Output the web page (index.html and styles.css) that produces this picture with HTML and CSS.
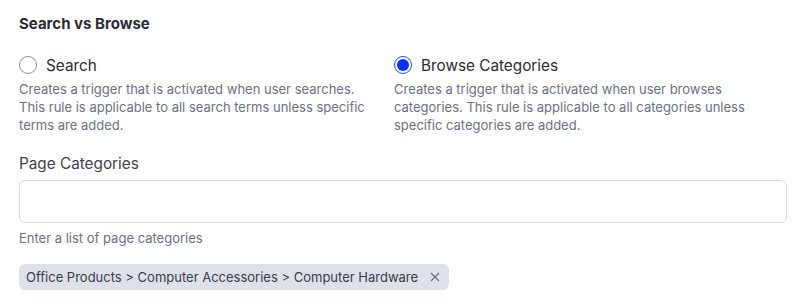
FILE: index.html
```html
<!DOCTYPE html>
<html>
<head>
<meta charset="utf-8">
<link rel="stylesheet" href="styles.css">
</head>
<body>
<div class="panel">
  <h2 class="title">Search vs Browse</h2>
  <div class="options">
    <div class="option">
      <label class="radio-row"><span class="radio"></span><span class="radio-label">Search</span></label>
      <p class="desc">Creates a trigger that is activated when user searches. This rule is applicable to all search terms unless specific terms are added.</p>
    </div>
    <div class="option">
      <label class="radio-row"><span class="radio checked"></span><span class="radio-label">Browse Categories</span></label>
      <p class="desc">Creates a trigger that is activated when user browses categories. This rule is applicable to all categories unless specific categories are added.</p>
    </div>
  </div>
  <div class="field">
    <div class="field-label">Page Categories</div>
    <div class="input"></div>
    <div class="help">Enter a list of page categories</div>
  </div>
  <div class="chips">
    <span class="chip">Office Products &gt; Computer Accessories &gt; Computer Hardware<svg class="chip-x" width="10" height="10" viewBox="0 0 10 10"><path d="M1 1L9 9M9 1L1 9" stroke="#6b6e80" stroke-width="1.2" fill="none"/></svg></span>
  </div>
</div>
</body>
</html>
```
FILE: styles.css
```css
html, body {
  margin: 0;
  padding: 0;
  background: #ffffff;
}
body {
  font-family: Inter, "Noto Sans", sans-serif;
  color: #2b2d3a;
}
.panel {
  padding: 14px 13px 0 19px;
}
.title {
  margin: 0;
  font-size: 15px;
  font-weight: 700;
  line-height: 20px;
  color: #2a2c36;
}
.options {
  display: grid;
  grid-template-columns: 355px 1fr;
  column-gap: 20px;
  margin-top: 20px;
}
.radio-row {
  display: flex;
  align-items: center;
  gap: 9px;
  height: 22px;
}
.radio {
  width: 16px;
  height: 16px;
  border: 1px solid #8d8f9c;
  border-radius: 50%;
  box-sizing: content-box;
  position: relative;
  flex: none;
}
.radio.checked {
  border-color: #1e4fd6;
  background: #ffffff;
}
.radio.checked::after {
  content: "";
  position: absolute;
  left: 2px;
  top: 2px;
  width: 12px;
  height: 12px;
  border-radius: 50%;
  background: #0a2ef5;
}
.radio-label {
  font-size: 15.3px;
  color: #2a2c36;
}
.desc {
  margin: 4px 0 0 0;
  font-size: 13px;
  line-height: 18px;
  color: #6c6f86;
}
.field {
  margin-top: 20px;
}
.field-label {
  font-size: 15.3px;
  line-height: 20px;
  color: #3f4150;
}
.input {
  margin-top: 6px;
  height: 43px;
  box-sizing: border-box;
  border: 1px solid #d8d9de;
  border-radius: 6px;
  background: #fff;
}
.help {
  margin-top: 7px;
  font-size: 13px;
  line-height: 16px;
  color: #6c6f86;
}
.chips {
  margin-top: 18px;
  display: flex;
}
.chip {
  display: inline-flex;
  align-items: center;
  gap: 12px;
  height: 26px;
  padding: 0 9px 0 7px;
  background: #dfe1ea;
  border-radius: 6px;
  font-size: 13px;
  color: #3a3c4a;
}
.chip-x {
  flex: none;
}
```
